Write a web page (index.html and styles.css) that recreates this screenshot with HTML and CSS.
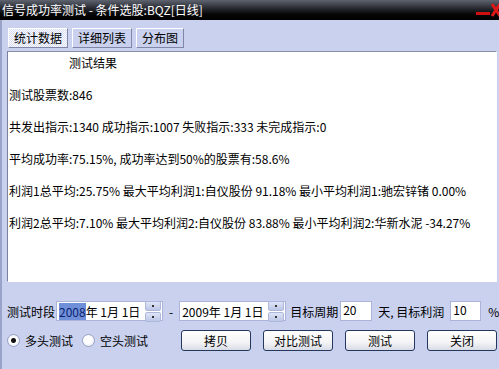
FILE: index.html
```html
<!DOCTYPE html>
<html lang="zh">
<head>
    <meta charset="UTF-8">
    <title>信号成功率测试</title>
    <link rel="stylesheet" href="styles.css">
</head>
<body>

<div class="titlebar">
    <span class="title">信号成功率测试 - 条件选股:BQZ[日线]</span>
    <svg class="winbtns" width="26" height="20" viewBox="0 0 26 20">
        <rect x="3" y="12" width="14" height="3" fill="#d01010"/>
        <path d="M19 4 L27 16 M27 4 L19 16" stroke="#e01818" stroke-width="3"/>
    </svg>
</div>

<div class="client">
    <!-- záložky -->
    <div class="tabs">
        <span class="tab active">统计数据</span>
        <span class="tab">详细列表</span>
        <span class="tab">分布图</span>
    </div>

    <div class="panel">
        <div class="line center">测试结果</div>
        <div class="line">测试股票数:846</div>
        <div class="line">共发出指示:1340 成功指示:1007 失败指示:333 未完成指示:0</div>
        <div class="line">平均成功率:75.15%, 成功率达到50%的股票有:58.6%</div>
        <div class="line">利润1总平均:25.75% 最大平均利润1:自仪股份 91.18% 最小平均利润1:驰宏锌锗 0.00%</div>
        <div class="line">利润2总平均:7.10% 最大平均利润2:自仪股份 83.88% 最小平均利润2:华新水泥 -34.27%</div>
    </div>

    <div class="row dates">
        <span class="label">测试时段</span>
        <div class="datebox">
            <span><span class="sel">2008</span>年 1月 1日</span>
            <span class="spin"><i class="up"></i><i class="down"></i></span>
        </div>
        <span class="dash">-</span>
        <div class="datebox">
            <span>2009年 1月 1日</span>
            <span class="spin"><i class="up"></i><i class="down"></i></span>
        </div>
        <span class="label period">目标周期</span>
        <span class="field f-period">20</span>
        <span class="label profit">天, 目标利润</span>
        <span class="field f-profit">10</span>
        <span class="pct">%</span>
    </div>

    <div class="row actions">
        <label class="radio checked">多头测试</label>
        <label class="radio">空头测试</label>
        <div class="buttons">
            <button>拷贝</button>
            <button>对比测试</button>
            <button>测试</button>
            <button>关闭</button>
        </div>
    </div>
</div>

</body>
</html>
```

FILE: styles.css
```css
body {
    margin: 0;
    width: 499px;
    height: 369px;
    overflow: hidden;
    background-color: #c9d1ee;
    font-family: "Noto Sans CJK SC", sans-serif;
    font-size: 12px;
    color: #000;
}
.titlebar {
    height: 20px;
    display: flex;
    align-items: center;
    padding-left: 2px;
    background: linear-gradient(#5e636f, #2a2c33 40%, #070708 70%, #000);
    color: #fff;
}
.title {
    line-height: 20px;
}
.winbtns {
    margin-left: auto;
}
.client {
    height: 349px;
    box-sizing: border-box;
    border-left: 2px solid #9aa3ca;
    padding: 8px 2px 0 5px;
}
.tabs {
    display: flex;
    gap: 4px;
    margin-left: 1px;
    height: 20px;
}
.tab {
    border: 1px solid;
    border-color: #fff #7f86a8 #7f86a8 #fff;
    padding: 0 5px;
    line-height: 18px;
}
.tab.active {
    background: repeating-conic-gradient(#fff 0 25%, #d3daf2 0 50%) 0 0 / 2px 2px;
}
.panel {
    margin-top: 3px;
    width: 490px;
    height: 231px;
    box-sizing: border-box;
    background-color: #fff;
    border: 1px solid;
    border-color: #8a90aa #fff #fff #7a80a0;
    padding: 3px 0 0 1px;
    white-space: nowrap;
}
.line {
    height: 16px;
    line-height: 16px;
    margin-bottom: 16px;
}
.line.center {
    padding-left: 60px;
}
.row {
    display: flex;
    align-items: center;
    white-space: nowrap;
}
.row > * {
    flex-shrink: 0;
}
.dates {
    margin-top: 19px;
    height: 20px;
}
.datebox {
    width: 107px;
    height: 20px;
    box-sizing: border-box;
    border: 1px solid #a9b4d8;
    background-color: #fff;
    display: flex;
    align-items: center;
    padding-left: 2px;
    margin-left: 1px;
}
.sel {
    background-color: #6f90d8;
    color: #0d2372;
}
.spin {
    margin-left: auto;
    margin-right: 1px;
    width: 16px;
    display: flex;
    flex-direction: column;
    gap: 1px;
}
.spin i {
    height: 8px;
    background: linear-gradient(#dfe5f7, #bcc6e6);
    border: 1px solid #aeb8dc;
    border-radius: 2px;
    position: relative;
}
.spin i::after {
    content: "";
    position: absolute;
    left: 6px;
    top: 3px;
    width: 2px;
    height: 2px;
    background-color: #333;
}
.dash {
    margin: 0 5px 0 6px;
}
.period {
    margin-left: 4px;
}
.field {
    height: 20px;
    box-sizing: border-box;
    border: 1px solid #a9b4d8;
    background-color: #fff;
    padding-left: 2px;
    line-height: 15px;
}
.f-period {
    width: 32px;
    margin-left: 2px;
}
.profit {
    margin-left: 6px;
}
.f-profit {
    width: 31px;
    margin-left: 6px;
}
.pct {
    margin-left: 7px;
}
.actions {
    margin-top: 9px;
    height: 21px;
}
.radio {
    display: flex;
    align-items: center;
}
.radio::before {
    content: "";
    width: 11px;
    height: 11px;
    border-radius: 50%;
    border: 1px solid #98a2c4;
    background: radial-gradient(circle at 40% 40%, #fff 40%, #dde2f0);
    margin-right: 5px;
}
.radio.checked::before {
    background: radial-gradient(circle, #111 2px, #fff 3px, #fff 40%, #dde2f0);
}
.radio + .radio {
    margin-left: 9px;
}
.buttons {
    display: flex;
    gap: 12px;
    margin-left: 33px;
}
button {
    width: 70px;
    height: 21px;
    font-family: inherit;
    font-size: 12px;
    padding: 0;
    border: 1px solid #24385e;
    border-radius: 3px;
    background: linear-gradient(#fff, #f4f4f6 60%, #d9dce6);
}
```
